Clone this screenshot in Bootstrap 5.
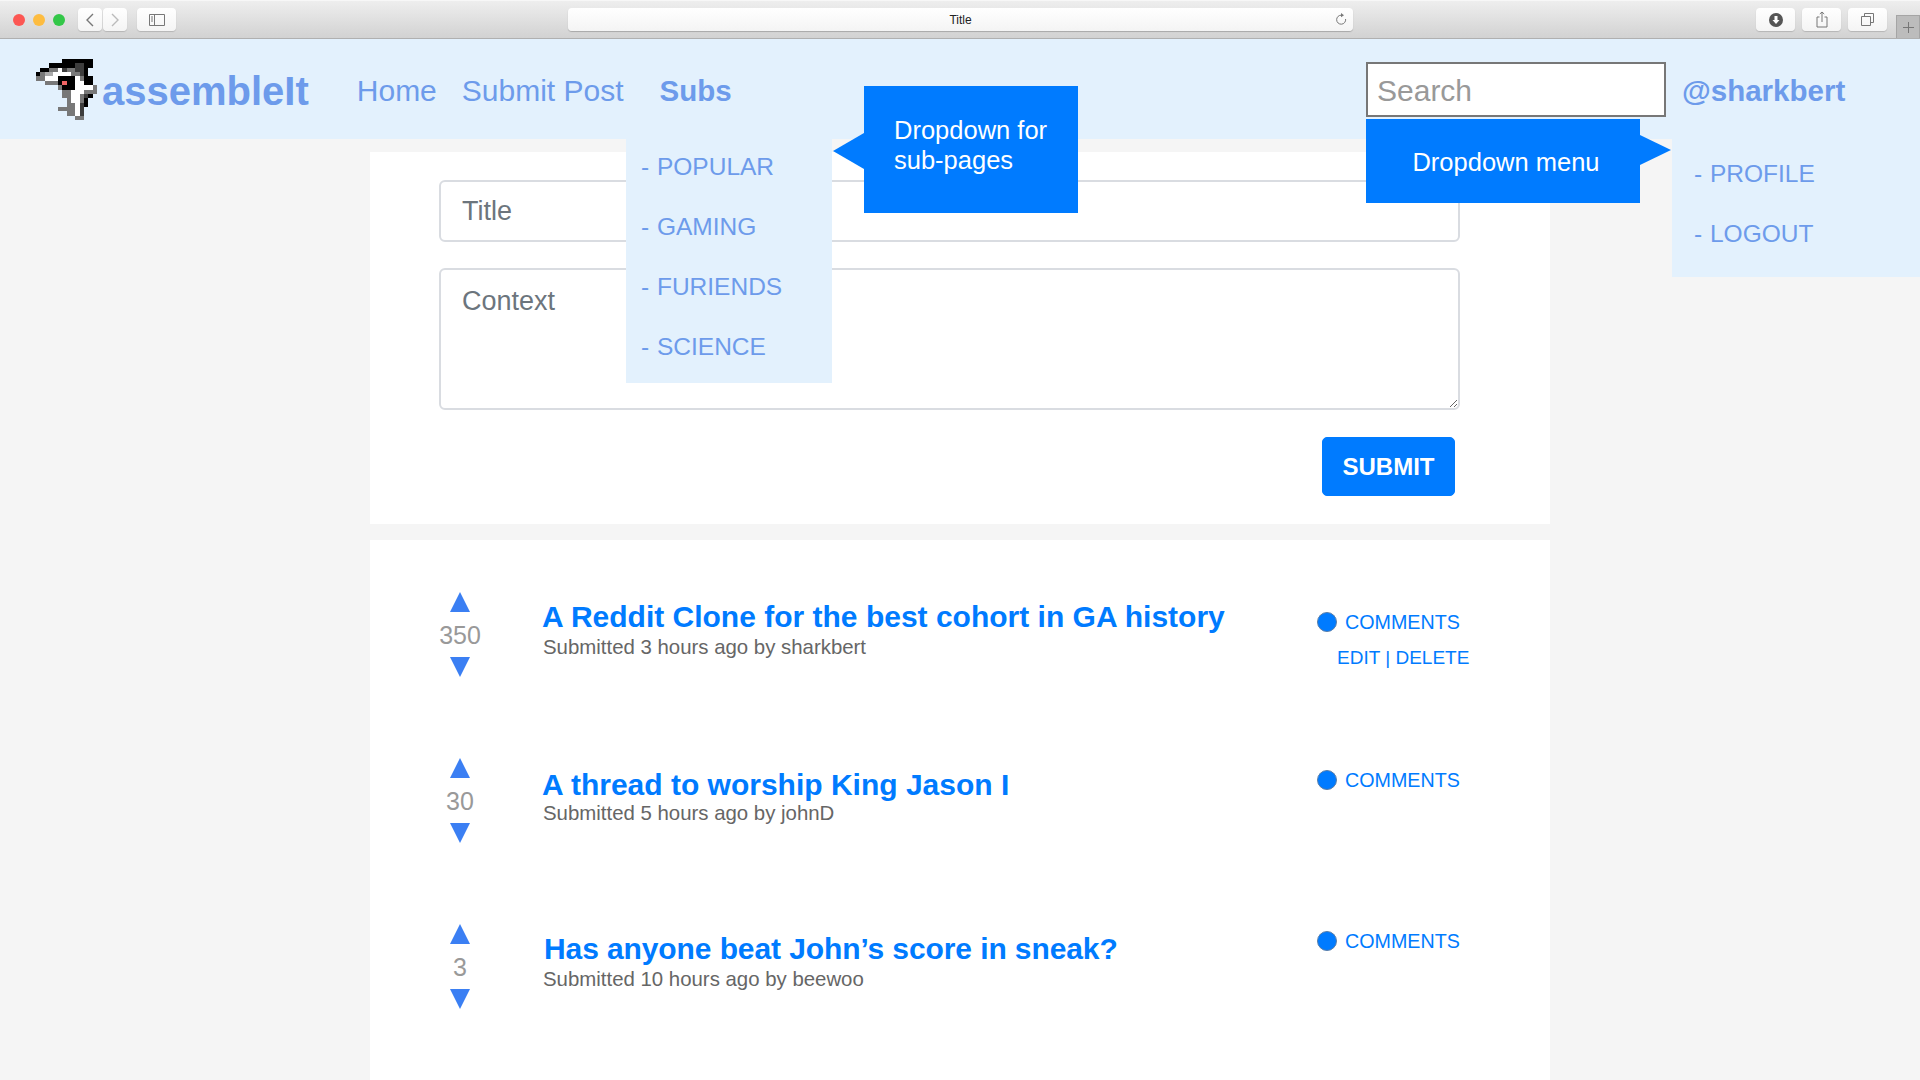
<!DOCTYPE html>
<html lang="en">
<head>
<meta charset="utf-8">
<title>assembleIt</title>
<link href="https://cdn.jsdelivr.net/npm/bootstrap@5.3.0/dist/css/bootstrap.min.css" rel="stylesheet">
<style>
html,body{height:100%;overflow:hidden}
body{background:#f5f5f5;font-family:"Liberation Sans",Arial,sans-serif;color:#666}
.chrome-bar{height:39px;background:linear-gradient(#eeeeee,#d2d2d2);border-top:1px solid #f7f7f7;border-bottom:1px solid #b0b0b0;padding-left:13px}
.light{width:12px;height:12px;border-radius:50%;margin-right:8px;flex:none}
.chrome-btn{height:23px;background:linear-gradient(#fff,#f4f4f4);border-radius:4px;box-shadow:0 1px 1px #b5b5b5;flex:none}
.w-nav{width:24px}.w-side{width:39px;margin-left:10px}.w-tool{width:39px}
.addr{width:785px;flex:none;height:23px;margin-left:392px;background:linear-gradient(#fff,#f4f4f4);border-radius:4px;box-shadow:0 1px 1px #a8a8a8;font-size:12px;color:#222;padding-right:6px}
.addr-text{flex:1;text-align:center;padding-left:18px}
.tool-group{gap:7px;margin-left:403px;flex:none}
.tab-plus{width:24px;height:23px;margin-left:auto;flex:none;align-self:flex-end;background:#bcbcbc;border:1px solid #a5a5a5;border-bottom:0}
.top-nav{height:100px;background:#e3f1fd;padding:0 0 0 36px;color:#6d9beb;flex-wrap:nowrap;justify-content:flex-start;align-items:stretch}
.shark{width:61px;height:61px;margin-top:20px;flex:none}
.brand-text{font-size:40px;font-weight:700;color:#6d9beb;line-height:46px;margin:29px 0 0 5px;padding:0}
.brand-text:hover{color:#6d9beb}
.main-links{gap:25px;margin-left:48px;font-size:30px;line-height:36px;padding-top:34px}
.main-links .nav-link{padding:0;color:#6d9beb}
.main-links .nav-link.strong-link{font-weight:700;margin-left:11px;color:#6d9beb;font-size:29.5px}
.search-box{width:300px;height:55px;margin:23px 16px 0 auto;border:2px solid #777;font-size:30px;padding:2px 9px 0;border-radius:0;flex:none;color:#999}
.search-box::placeholder{color:#999}
.handle{font-size:29.500px;font-weight:700;line-height:36px;padding-top:34px;color:#6d9beb;width:238px;flex:none}
.drop-panel{position:absolute;top:100px;background:#e3f1fd;z-index:3;font-size:24.500px;line-height:36px;color:#6d9beb;gap:24px;margin:0;word-spacing:1px}
.drop-subs{left:626px;width:206px;padding:10px 0 18px 15px}
.drop-user{left:1672px;width:248px;padding:17px 0 25px 22px}
.tip-box{position:absolute;background:#007bff;color:#fff;font-size:25.500px;line-height:30px;z-index:4}
.tip-subs{left:864px;top:47px;width:214px;height:127px;padding:29px 0 0 30px}
.tip-subs::before{content:"";position:absolute;left:-31px;top:47px;border-style:solid;border-width:18px 31px 18px 0;border-color:transparent #007bff transparent transparent}
.tip-user{left:1366px;top:80px;width:274px;height:84px;text-align:center;padding-top:28px;padding-left:6px}
.tip-user::after{content:"";position:absolute;right:-31px;top:16px;border-style:solid;border-width:15px 0 15px 31px;border-color:transparent transparent transparent #007bff}
.sheet{width:1180px;margin:0 auto;border-radius:0;border:0}
.sheet-form{margin-top:13px;padding:28px 90px 28px 69px}
.sheet-posts{margin-top:16px;padding:52px 0 0 70px;height:540px}
.field{border:2px solid #d9dce1;border-radius:6px;font-size:27px;padding:0 21px;color:#6c757d}
.field::placeholder{color:#6c757d}
input.field{height:62px;margin-bottom:26px}
textarea.field{height:142px;padding-top:11px;margin-bottom:27px}
.send-btn{width:133px;height:59px;margin-right:5px;background:#007bff;border-color:#007bff;font-size:24px;font-weight:700;padding:0;border-radius:5px}
.post-row{height:166px}
.post-row:last-child{height:110px}
.vote-col{width:40px;height:85px;color:#999;font-size:25px;line-height:28px}
.tri-up,.tri-down{width:0;height:0;border-style:solid;border-color:transparent}
.tri-up{border-width:0 10px 20px;border-bottom-color:#3b7ff3}
.tri-down{border-width:20px 10px 0;border-top-color:#3b7ff3}
.vote-num{margin:9px 0 8px}
.post-body{margin-left:63px;width:774px;flex:none}
.post-title{font-size:30px;font-weight:700;line-height:36px;color:#007bff;text-decoration:none;display:block;margin-top:7px;margin-left:-1px}
.post-meta{font-size:20.400px;line-height:24px;margin-top:0;color:#666}
.post-actions{font-size:19.700px;line-height:24px;color:#007bff;padding-top:18px}
.post-actions a{color:#007bff;text-decoration:none}
.dot{width:20px;height:20px;border-radius:50%;background:#007bff;border:1px solid #5a7ea8;margin-right:8px;flex:none}
.edit-line{padding-left:21px;margin-top:12px;font-size:19px;margin-left:-1px}
.row-two .post-title{margin-top:9px}.row-two .post-meta{margin-top:-2px}.row-two .post-actions{padding-top:10px}
.row-three .post-body{margin-left:63px}.row-three .post-actions{padding-top:5px}.row-three .post-title{margin-top:7px;margin-left:1px;letter-spacing:-.1px}
</style>
</head>
<body>
<div class="chrome-bar d-flex align-items-center">
  <span class="light" style="background:#fc5753"></span><span class="light" style="background:#fdbc40"></span><span class="light me-0" style="background:#33c748"></span>
  <div class="d-flex ms-3 gap-0" style="margin-left:13px!important">
    <div class="chrome-btn w-nav d-flex align-items-center justify-content-center"><svg width="10" height="14" viewBox="0 0 10 14"><path d="M8 1L2 7l6 6" fill="none" stroke="#777" stroke-width="1.4"/></svg></div>
    <div class="chrome-btn w-nav d-flex align-items-center justify-content-center" style="margin-left:1px"><svg width="10" height="14" viewBox="0 0 10 14"><path d="M2 1l6 6-6 6" fill="none" stroke="#bbb" stroke-width="1.4"/></svg></div>
  </div>
  <div class="chrome-btn w-side d-flex align-items-center justify-content-center"><svg width="16" height="12" viewBox="0 0 16 12"><path d="M.5.5h15v11H.5zM5.500.5v11" fill="none" stroke="#777"/><path d="M2 3h2M2 5h2M2 7h2" stroke="#777"/></svg></div>
  <div class="addr d-flex align-items-center"><span class="addr-text">Title</span>
    <svg width="12" height="13" viewBox="0 0 12 13"><path d="M6.500 2.200A4.500 4.500 0 1 0 10.600 6" fill="none" stroke="#777"/><path d="M6 0l3 2.200L6 4.200z" fill="#777"/></svg></div>
  <div class="d-flex tool-group">
    <div class="chrome-btn w-tool d-flex align-items-center justify-content-center"><svg width="14" height="14" viewBox="0 0 14 14"><circle cx="7" cy="7" r="7" fill="#555"/><path d="M5.500 3h3v4h2L7 11 3.500 7h2z" fill="#fff"/></svg></div>
    <div class="chrome-btn w-tool d-flex align-items-center justify-content-center"><svg width="12" height="17" viewBox="0 0 12 17"><path d="M3.500 6H1v10h10V6H8.500" fill="none" stroke="#777"/><path d="M6 11V1M3.800 3L6 1l2.200 2" fill="none" stroke="#777"/></svg></div>
    <div class="chrome-btn w-tool d-flex align-items-center justify-content-center"><svg width="13" height="13" viewBox="0 0 13 13"><path d="M.5 3.500h9v9h-9zM3.500 3.500v-3h9v9h-3" fill="none" stroke="#777"/></svg></div>
  </div>
  <div class="tab-plus d-flex align-items-center justify-content-center"><svg width="11" height="11" viewBox="0 0 11 11"><path d="M5.500 0v11M0 5.500h11" stroke="#777"/></svg></div>
</div>

<nav class="navbar top-nav position-relative">
  <svg class="shark" viewBox="0 0 14 14" shape-rendering="crispEdges" aria-label="shark logo">
    <path fill="#000" d="M6 0h7v1H6zM3 1h6v1H3zM11 1h2v1h-2zM1 2h2v1H1zM11 2h1v1h-1zM0 3h1v1H0zM11 3h1v1h-1zM5 4h4v1H5zM11 4h2v1h-2zM5 5h1v1H5zM7 5h2v1H7zM11 5h2v1h-2zM6 6h3v1H6zM12 8h1v1h-1zM11 9h1v1h-1zM11 10h1v1h-1z"/>
    <path fill="#3d3d3d" d="M9 1h2v1H9zM6 2h1v1H6zM9 2h2v1H9zM10 3h1v1h-1zM11 8h1v1h-1zM10 10h1v3h-1z"/>
    <path fill="#787878" d="M3 2h2v1H3zM7 2h2v1H7zM1 3h1v1H1zM8 3h2v1H8zM0 4h2v1H0zM10 4h1v1h-1zM2 5h3v1H2zM5 6h1v1H5zM13 6h1v2h-1zM6 7h2v1H6zM11 7h2v1h-2zM6 8h2v1H6zM10 8h1v2h-1zM7 9h1v1H7zM7 10h2v1H7zM5 11h4v1H5zM7 12h2v1H7zM9 13h2v1H9z"/>
    <path fill="#aaa" d="M2 3h2v1H2z"/>
    <path fill="#fff" d="M5 2h1v1H5zM4 3h4v1H4zM2 4h3v1H2zM9 4h1v1H9zM9 5h2v1H9zM9 6h4v1H9zM8 7h3v1H8zM8 8h2v1H8zM8 9h2v1H8zM9 10h1v3H9z"/>
    <path fill="#f06464" d="M6 5h1v1H6z"/>
  </svg>
  <a class="navbar-brand brand-text" href="#">assembleIt</a>
  <div class="navbar-nav flex-row main-links">
    <a class="nav-link" href="#">Home</a>
    <a class="nav-link" href="#">Submit Post</a>
    <a class="nav-link strong-link" href="#">Subs</a>
  </div>
  <input class="form-control search-box" type="text" placeholder="Search">
  <div class="handle">@sharkbert</div>

  <ul class="drop-panel drop-subs list-unstyled d-flex flex-column">
    <li>- POPULAR</li><li>- GAMING</li><li>- FURIENDS</li><li>- SCIENCE</li>
  </ul>
  <div class="tip-box tip-subs">Dropdown for<br>sub-pages</div>
  <div class="tip-box tip-user">Dropdown menu</div>
  <ul class="drop-panel drop-user list-unstyled d-flex flex-column">
    <li>- PROFILE</li><li>- LOGOUT</li>
  </ul>
</nav>

<div class="card sheet sheet-form">
  <form class="d-flex flex-column">
    <input class="form-control field" type="text" placeholder="Title">
    <textarea class="form-control field" placeholder="Context"></textarea>
    <div class="d-flex justify-content-end"><button type="button" class="btn btn-primary send-btn">SUBMIT</button></div>
  </form>
</div>

<div class="card sheet sheet-posts">
  <div class="post-row d-flex align-items-start">
    <div class="vote-col d-flex flex-column align-items-center"><span class="tri-up"></span><span class="vote-num">350</span><span class="tri-down"></span></div>
    <div class="post-body"><a class="post-title" href="#">A Reddit Clone for the best cohort in GA history</a><div class="post-meta">Submitted 3 hours ago by sharkbert</div></div>
    <div class="post-actions"><div class="d-flex align-items-center"><span class="dot"></span><a href="#">COMMENTS</a></div><div class="edit-line"><a href="#">EDIT</a> | <a href="#">DELETE</a></div></div>
  </div>
  <div class="post-row row-two d-flex align-items-start">
    <div class="vote-col d-flex flex-column align-items-center"><span class="tri-up"></span><span class="vote-num">30</span><span class="tri-down"></span></div>
    <div class="post-body"><a class="post-title" href="#">A thread to worship King Jason I</a><div class="post-meta">Submitted 5 hours ago by johnD</div></div>
    <div class="post-actions"><div class="d-flex align-items-center"><span class="dot"></span><a href="#">COMMENTS</a></div></div>
  </div>
  <div class="post-row row-three d-flex align-items-start">
    <div class="vote-col d-flex flex-column align-items-center"><span class="tri-up"></span><span class="vote-num">3</span><span class="tri-down"></span></div>
    <div class="post-body"><a class="post-title" href="#">Has anyone beat John’s score in sneak?</a><div class="post-meta">Submitted 10 hours ago by beewoo</div></div>
    <div class="post-actions"><div class="d-flex align-items-center"><span class="dot"></span><a href="#">COMMENTS</a></div></div>
  </div>
</div>
<script src="https://cdn.jsdelivr.net/npm/bootstrap@5.3.0/dist/js/bootstrap.bundle.min.js"></script>
</body>
</html>
